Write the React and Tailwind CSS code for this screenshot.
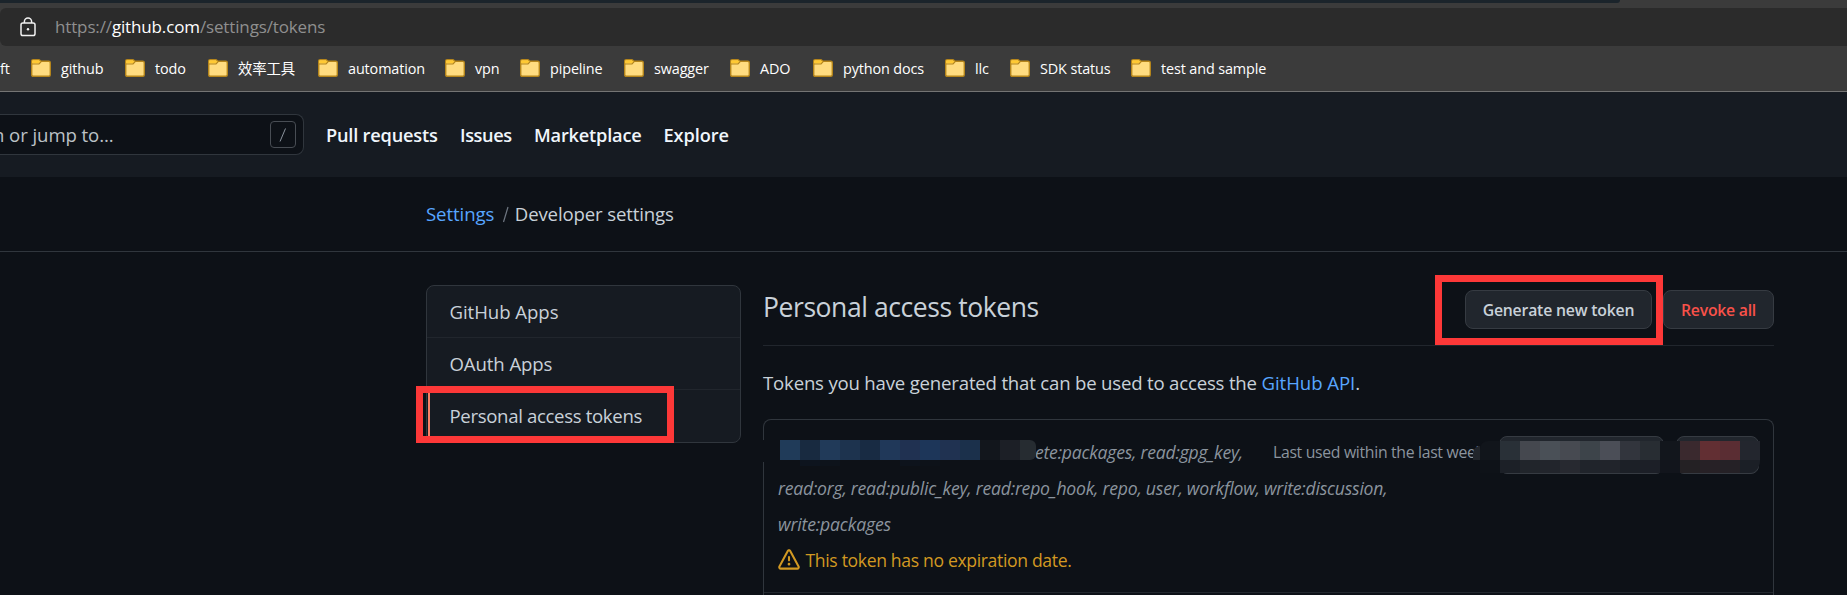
import React from "react";

const bookmarks = [
  { label: "github", width: "w-[94px]" },
  { label: "todo", width: "w-[83px]" },
  { label: "效率工具", width: "w-[110px]" },
  { label: "automation", width: "w-[127px]" },
  { label: "vpn", width: "w-[75px]" },
  { label: "pipeline", width: "w-[104px]" },
  { label: "swagger", width: "w-[106px]" },
  { label: "ADO", width: "w-[83px]" },
  { label: "python docs", width: "w-[132px]" },
  { label: "llc", width: "w-[65px]" },
  { label: "SDK status", width: "w-[121px]" },
  { label: "test and sample", width: "w-[150px]" },
];

function Folder() {
  return (
    <svg width="20" height="18" viewBox="0 0 20 18" className="shrink-0">
      <path d="M.7 2.2Q.7.7 2.2.7H8l2.2 1.6h7.6q1.5 0 1.5 1.5v12q0 1.5-1.5 1.5H2.2q-1.5 0-1.5-1.5z" fill="#ffdc80" stroke="#b5851b" strokeWidth="1.4" />
      <path d="M1.2 1.2h6.6l1.8 1.6L8 4.6H1.2z" fill="#ffc933" />
      <path d="M1 5h7l2.2-2.4" fill="none" stroke="#b5851b" strokeWidth="1.2" />
    </svg>
  );
}

function Lock() {
  return (
    <svg width="16" height="20" viewBox="0 0 16 20" fill="none" stroke="#f2f2f2" strokeWidth="1.5" className="shrink-0">
      <rect x="1" y="6" width="14" height="12.5" rx="1.8" />
      <path d="M4.4 6V4.6a3.6 3.6 0 0 1 7.2 0V6" />
      <circle cx="8" cy="12.2" r="1.2" fill="#f2f2f2" stroke="none" />
    </svg>
  );
}

function BrowserChrome() {
  return (
    <div className="shrink-0 bg-[#3b3b3b]">
      <div className="h-[3px] w-[1620px] rounded-br-[3px] bg-[#1b242b]" />
      <div className="mt-[5px] flex h-[38px] items-center rounded-l-md bg-[#2b2b2b] pl-[19.5px]">
        <Lock />
        <div className="ml-[19.5px] text-[17px] tracking-[-0.14px] text-[#8f8f8f]">
          https://<span className="text-white">github.com</span>/settings/tokens
        </div>
      </div>
      <div className="flex h-[46px] items-center border-b border-[#747474] text-[14.4px] tracking-[-0.12px] text-white">
        <div className="w-[31px]">ft</div>
        {bookmarks.map((b) => (
          <div key={b.label} className={`flex shrink-0 items-center gap-[10px] whitespace-nowrap ${b.width}`}>
            <Folder />
            <span>{b.label}</span>
          </div>
        ))}
      </div>
    </div>
  );
}

function Header() {
  return (
    <header className="flex h-[85px] shrink-0 items-center bg-[#161b22]">
      <div className="flex h-[41px] w-[304px] shrink-0 items-center justify-between overflow-hidden rounded-r-lg border border-l-0 border-[#30363d] bg-[#0d1117] pr-[7px]">
        <span className="-ml-[7px] pt-px whitespace-nowrap text-[18.6px] tracking-[-0.08px] text-[#bcc1c6]">n or jump to...</span>
        <span className="flex h-[27px] w-[26px] items-center justify-center rounded border border-[#484d54]">
          <svg width="8" height="14" viewBox="0 0 8 14" stroke="#8b949e" strokeWidth="1"><path d="M1 13.5 6.5.5" /></svg>
        </span>
      </div>
      <nav className="flex pt-[2px] pl-[22px] text-[18.2px] font-semibold whitespace-nowrap text-[#f0f6fc]">
        <a className="w-[134px] tracking-[-0.2px]">Pull requests</a>
        <a className="w-[74px] tracking-[-0.42px]">Issues</a>
        <a className="w-[129.5px] tracking-[-0.2px]">Marketplace</a>
        <a className="tracking-[-0.07px]">Explore</a>
      </nav>
    </header>
  );
}

function Sidebar() {
  return (
    <div className="relative w-[315px] shrink-0">
      <div className="flex h-[158px] flex-col overflow-hidden rounded-lg border border-[#30363d] bg-[#161b22] text-[18.6px] whitespace-nowrap">
        <div className="flex h-[52px] items-center border-b border-[#21262d] pl-[22.5px] tracking-[-0.05px]">GitHub Apps</div>
        <div className="flex h-[52px] items-center border-b border-[#21262d] pl-[22.5px] tracking-[-0.1px]">OAuth Apps</div>
        <div className="flex h-[52px] items-center pl-px tracking-[-0.34px]">
          <div className="h-full w-[2px] bg-[#f78166]" />
          <span className="pl-[19.5px]">Personal access tokens</span>
        </div>
      </div>
      <div className="absolute top-[101px] -left-[10px] h-[57px] w-[258px] border-[7px] border-[#fd3838]" />
    </div>
  );
}

const nameMosaic = ["bg-[#203b59]", "bg-[#182a40]", "bg-[#213a59]", "bg-[#1d334e]", "bg-[#182b43]", "bg-[#203859]", "bg-[#203151]", "bg-[#1d3659]", "bg-[#203251]", "bg-[#1b304b]", "bg-[#12161c]", "bg-[#1c1f26]"];
const nameShade = ["bg-[#0d1117]", "bg-[#0d141e]", "bg-[#0d131b]", "bg-[#0d1117]", "bg-[#0d1117]", "bg-[#0d1117]", "bg-[#0d131c]", "bg-[#0d1219]"];
const buttonTop = ["bg-[#11151b]", "bg-[#293037]", "bg-[#45484f]", "bg-[#4a5057]", "bg-[#474a51]", "bg-[#3d444a]", "bg-[#4b4e57]", "bg-[#32353d]", "bg-[#282d33]", "bg-[#12161c]", "bg-[#3a292e]", "bg-[#622f33]", "bg-[#5a2d33]", "bg-[#23262e]"];
const buttonBottom = ["bg-[#0e1218]", "bg-[#1c2027]", "bg-[#21252b]", "bg-[#22252c]", "bg-[#272930]", "bg-[#20242b]", "bg-[#21242b]", "bg-[#1c2027]", "bg-[#1c1f27]", "bg-[#12151c]", "bg-[#242124]", "bg-[#272126]", "bg-[#252126]", "bg-[#1b1f26]"];

function TokenRow() {
  return (
    <div className="relative mt-[18px] h-[190px] w-[1011px] rounded-t-lg border border-b-0 border-[#30363d]">
      <div className="h-[173px] border-b border-[#21262d] pt-[14px] pl-[14px] leading-[36px] whitespace-nowrap">
        <div className="flex text-[17.6px] text-[#8b949e]">
          <div className="w-[495px] pl-[257px] italic tracking-[-0.23px]">ete:packages, read:gpg_key,</div>
          <div className="text-[15.8px] tracking-[-0.32px]">Last used within the last week</div>
        </div>
        <div className="text-[17.6px] tracking-[-0.23px] text-[#8b949e] italic">read:org, read:public_key, read:repo_hook, repo, user, workflow, write:discussion,</div>
        <div className="text-[17.6px] tracking-[-0.15px] text-[#8b949e] italic">write:packages</div>
        <div className="flex items-center text-[17.6px] tracking-[-0.35px] text-[#d29922]">
          <svg width="22" height="22" viewBox="0 0 16 16" fill="#d29922" className="-mt-px mr-[5.5px] shrink-0">
            <path fillRule="evenodd" d="M8.22 1.754a.25.25 0 0 0-.44 0L1.698 13.132a.25.25 0 0 0 .22.368h12.164a.25.25 0 0 0 .22-.368L8.22 1.754zm-1.763-.707c.659-1.234 2.427-1.234 3.086 0l6.082 11.378A1.75 1.75 0 0 1 14.082 15H1.918a1.75 1.75 0 0 1-1.543-2.575L6.457 1.047zM9 11a1 1 0 1 1-2 0 1 1 0 0 1 2 0zm-.25-5.25a.75.75 0 0 0-1.5 0v2.5a.75.75 0 0 0 1.5 0v-2.5z" />
          </svg>
          This token has no expiration date.
        </div>
      </div>

      {/* Redaction over the token name */}
      <div className="absolute top-[20px] -left-[4px] flex items-start">
        <div className="h-[22px] w-[20px] bg-[#0d1117]" />
        <div>
          <div className="flex">
            {nameMosaic.map((c, i) => <div key={i} className={`h-[20px] w-[20px] ${c}`} />)}
            <div className="h-[20px] w-[16px] rounded-r-md bg-[#262c31]" />
          </div>
          <div className="flex">{nameShade.map((c, i) => <div key={i} className={`h-[6px] w-[20px] ${c}`} />)}</div>
        </div>
      </div>

      {/* Redaction over the row buttons */}
      <div className="absolute top-[16px] left-[735px] h-[38px] w-[165px] rounded-lg border border-[#363b42] bg-[#21262d]" />
      <div className="absolute top-[16px] left-[912px] h-[38px] w-[83px] rounded-lg border border-[#363b42] bg-[#21262d]" />
      <div className="absolute top-[21px] left-[709px] flex items-start">
        <div className="h-[19px] w-[7px] pt-[5px]">
          <div className="h-[14px] rounded-tl-[7px] bg-[#21252b]" />
        </div>
        <div>
          <div className="flex overflow-hidden rounded-tl-lg">
            {buttonTop.map((c, i) => <div key={i} className={`h-[19px] w-[20px] ${c}`} />)}
          </div>
          <div className="flex overflow-hidden rounded-br-xl">
            {buttonBottom.map((c, i) => <div key={i} className={`h-[13px] w-[20px] ${c}`} />)}
          </div>
        </div>
      </div>
    </div>
  );
}

function Main() {
  return (
    <main className="ml-[22px] w-[1011px]">
      <div className="relative flex h-[61px] items-start justify-between border-b border-[#21262d]">
        <h1 className="text-[26.5px] leading-[44px] tracking-[-0.42px] whitespace-nowrap">Personal access tokens</h1>
        <div className="mt-[5px] flex gap-[11px] text-[15.8px] font-semibold whitespace-nowrap">
          <button className="h-[39px] w-[187px] rounded-lg border border-[#363b42] bg-[#21262d] pt-[2px] tracking-[-0.2px]">Generate new token</button>
          <button className="h-[39px] w-[111px] rounded-lg border border-[#363b42] bg-[#21262d] pt-[2px] tracking-[-0.25px] text-[#f85149]">Revoke all</button>
        </div>
        <div className="absolute -top-[10px] left-[672px] h-[70px] w-[228px] border-[7px] border-[#fd3838]" />
      </div>
      <p className="mt-[19px] text-[18.6px] leading-[36px] tracking-[-0.19px] whitespace-nowrap">
        Tokens you have generated that can be used to access the <a className="tracking-[-0.05px] text-[#58a6ff]">GitHub API</a>.
      </p>
      <TokenRow />
    </main>
  );
}

export default function App() {
  return (
    <div className="flex h-[595px] w-[1847px] flex-col overflow-hidden bg-[#0d1117] font-['Open_Sans','Noto_Sans_CJK_SC',sans-serif] text-[#c9d1d9]">
      <BrowserChrome />
      <Header />
      <div className="flex h-[75px] shrink-0 items-center border-b border-[#30363d] pl-[426px] text-[18.6px] whitespace-nowrap">
        <a className="tracking-[-0.08px] text-[#58a6ff]">Settings</a>
        <svg width="8" height="17" viewBox="0 0 8 17" className="mr-[5px] ml-[7.5px]" stroke="#6e7681" strokeWidth="1.2"><path d="M1.5 16 6 1" /></svg>
        <span className="tracking-[-0.14px]">Developer settings</span>
      </div>
      <div className="flex items-start pt-[33px] pl-[426px]">
        <Sidebar />
        <Main />
      </div>
    </div>
  );
}
